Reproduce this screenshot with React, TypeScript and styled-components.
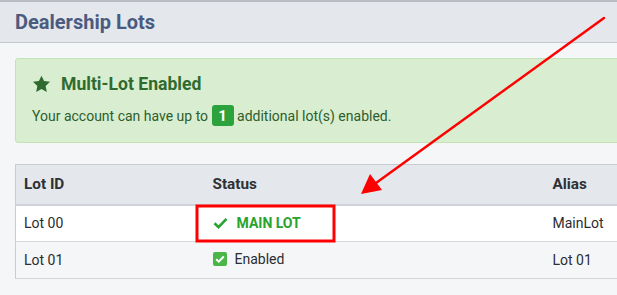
import React from "react";
import styled, { createGlobalStyle } from "styled-components";

const GlobalStyle = createGlobalStyle`
  html, body {
    margin: 0;
    padding: 0;
    background: #f5f6f8;
    overflow: hidden;
  }
  body {
    font-family: Roboto, "Liberation Sans", Arial, sans-serif;
  }
`;

type Lot = {
  id: string;
  alias: string;
  main?: boolean;
};

const lots: Lot[] = [
  { id: "Lot 00", alias: "MainLot", main: true },
  { id: "Lot 01", alias: "Lot 01" },
];

const App: React.FC = () => {
  return (
    <Page>
      <GlobalStyle />
      <Header>
        <h1>Dealership Lots</h1>
      </Header>
      <Body>
        <Alert>
          <div className="title">
            <StarIcon />
            <h4>Multi-Lot Enabled</h4>
          </div>
          <p>
            Your account can have up to <Badge>1</Badge> additional lot(s)
            enabled.
          </p>
        </Alert>
        <Table>
          <thead>
            <tr>
              <HeadCell $width={189}>Lot ID</HeadCell>
              <HeadCell $width={340}>Status</HeadCell>
              <HeadCell>Alias</HeadCell>
            </tr>
          </thead>
          <tbody>
            {lots.map((lot, i) => (
              <Row key={lot.id} $striped={i % 2 === 1}>
                <Cell>{lot.id}</Cell>
                <Cell>
                  {lot.main ? (
                    <MainLot>
                      <CheckIcon />
                      MAIN LOT
                    </MainLot>
                  ) : (
                    <EnabledStatus>
                      <CheckBox />
                      Enabled
                    </EnabledStatus>
                  )}
                </Cell>
                <Cell>{lot.alias}</Cell>
              </Row>
            ))}
          </tbody>
        </Table>
      </Body>
      <Annotation width="660" height="295" viewBox="0 0 660 295">
        <rect
          x="197"
          y="206"
          width="137"
          height="35"
          fill="none"
          stroke="#f00"
          strokeWidth="3"
        />
        <line
          x1="604"
          y1="18"
          x2="376"
          y2="183"
          stroke="#f00"
          strokeWidth="2.5"
          strokeLinecap="round"
        />
        <polygon points="361,194 370,174 382,190" fill="#f00" />
      </Annotation>
    </Page>
  );
};

const StarIcon = () => (
  <svg width="19" height="18" viewBox="0 0 24 23" aria-hidden>
    <path
      d="M12 0.8l3.3 7 7.6.9-5.6 5.3 1.5 7.6L12 17.8l-6.8 3.8 1.5-7.6L1.1 8.7l7.6-.9z"
      fill="#2f6b2e"
    />
  </svg>
);

const CheckIcon = () => (
  <svg width="15" height="12" viewBox="0 0 15 12" aria-hidden>
    <path
      d="M1.5 6.3l4 3.8L13.5 1.8"
      fill="none"
      stroke="#28a32e"
      strokeWidth="2.6"
    />
  </svg>
);

const CheckBox = () => (
  <svg width="14" height="14" viewBox="0 0 14 14" aria-hidden>
    <rect width="14" height="14" rx="2" fill="#4cb548" />
    <path
      d="M3.2 7.2l2.6 2.5 5-5.2"
      fill="none"
      stroke="#fff"
      strokeWidth="2"
    />
  </svg>
);

const Page = styled.div`
  position: relative;
  width: 660px;
  height: 295px;
  background: #f5f6f8;
  border-top: 2px solid #b9bdc3;
  box-sizing: border-box;
`;

const Header = styled.div`
  height: 40px;
  background: #e4e7eb;
  border-bottom: 1px solid #c4c8ce;
  display: flex;
  align-items: center;
  padding: 0 15px;
  h1 {
    margin: 0;
    font-size: 20px;
    font-weight: 700;
    color: #4b5b80;
  }
`;

const Body = styled.div`
  padding: 15px 0 0 15px;
  display: flex;
  flex-direction: column;
  gap: 21px;
`;

const Alert = styled.div`
  background: #d9edd0;
  border: 1px solid #c4e2b5;
  border-radius: 3px;
  padding: 15px 16px 15px 16px;
  color: #2d5e2c;
  height: 53px;
  .title {
    display: flex;
    align-items: center;
    gap: 10px;
    h4 {
      margin: 0;
      font-size: 17.6px;
      font-weight: 700;
      color: #2f6b2e;
    }
  }
  p {
    margin: 11px 0 0 0;
    font-size: 14px;
    display: flex;
    align-items: center;
    white-space: pre;
  }
`;

const Badge = styled.span`
  display: inline-flex;
  align-items: center;
  justify-content: center;
  width: 22px;
  height: 21px;
  border-radius: 3px;
  background: #2ba23b;
  color: #fff;
  font-weight: 700;
  font-size: 15px;
`;

const Table = styled.table`
  border-collapse: collapse;
  width: 645px;
  border: 1px solid #c9cdd3;
  font-size: 14px;
  color: #2b2d31;
`;

const HeadCell = styled.th<{ $width?: number }>`
  width: ${(p) => (p.$width ? `${p.$width}px` : "auto")};
  height: 40px;
  padding: 0 8px;
  background: #e4e7eb;
  text-align: left;
  font-size: 15.3px;
  font-weight: 700;
  color: #2e3136;
  border-bottom: 2px solid #cfd3d8;
  box-sizing: border-box;
`;

const Row = styled.tr<{ $striped?: boolean }>`
  background: ${(p) => (p.$striped ? "#f5f6f8" : "#ffffff")};
  border-bottom: 1px solid #d3d6db;
`;

const Cell = styled.td`
  height: 37px;
  padding: 0 8px;
  box-sizing: border-box;
`;

const MainLot = styled.span`
  display: inline-flex;
  align-items: center;
  gap: 9px;
  color: #28a32e;
  font-weight: 700;
  font-size: 14px;
`;

const EnabledStatus = styled.span`
  display: inline-flex;
  align-items: center;
  gap: 8px;
  font-size: 14px;
`;

const Annotation = styled.svg`
  position: absolute;
  top: -2px;
  left: 0;
  pointer-events: none;
`;

export default App;
